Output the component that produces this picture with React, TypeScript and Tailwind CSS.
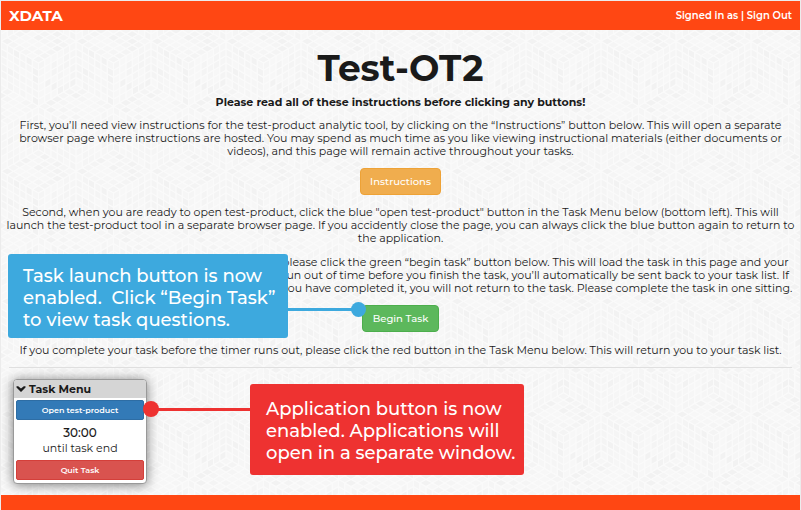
import React from 'react';

const TILES = 6;
const HALF = 37.5;
const RISE = 21.65;
const EDGE = 43.3;
const SHADES = ['#f7f7f7', '#f5f5f5', '#f6f6f6', '#f2f2f2', '#f7f7f7', '#f5f5f5', '#f4f4f4'];

type Point = [number, number];

/* One face of a cube, divided into a grid of small tiles. */
function Face({ origin, u, v, seed }: { origin: Point; u: Point; v: Point; seed: number }) {
  const tiles = [];
  for (let i = 0; i < TILES; i++) {
    for (let j = 0; j < TILES; j++) {
      const at = (a: number, b: number) => {
        const s = (i + a) / TILES;
        const t = (j + b) / TILES;
        return `${(origin[0] + u[0] * s + v[0] * t).toFixed(2)},${(origin[1] + u[1] * s + v[1] * t).toFixed(2)}`;
      };
      const noise = Math.abs(Math.sin((i + 1) * 12.9 + (j + 1) * 78.2 + seed * 37.7) * 4375.5);
      tiles.push(
        <polygon
          key={`${i}-${j}`}
          points={[at(0.1, 0.1), at(0.9, 0.1), at(0.9, 0.9), at(0.1, 0.9)].join(' ')}
          fill={SHADES[Math.floor(noise) % SHADES.length]}
        />,
      );
    }
  }
  return <>{tiles}</>;
}

function Cube({ x, y, seed }: { x: number; y: number; seed: number }) {
  return (
    <g>
      <Face origin={[x, y]} u={[-HALF, -RISE]} v={[HALF, -RISE]} seed={seed} />
      <Face origin={[x, y]} u={[-HALF, -RISE]} v={[0, EDGE]} seed={seed + 1} />
      <Face origin={[x, y]} u={[HALF, -RISE]} v={[0, EDGE]} seed={seed + 3} />
    </g>
  );
}

function CubePattern() {
  return (
    <svg aria-hidden="true" className="absolute inset-0 size-full">
      <defs>
        <pattern id="cubes" width="75" height="130" patternUnits="userSpaceOnUse" y="-3">
          <Cube x={37.5} y={65} seed={0} />
          <Cube x={0} y={0} seed={5} />
          <Cube x={75} y={0} seed={5} />
          <Cube x={0} y={130} seed={5} />
          <Cube x={75} y={130} seed={5} />
        </pattern>
      </defs>
      <rect width="100%" height="100%" fill="#fafafa" />
      <rect width="100%" height="373" fill="url(#cubes)" />
      <rect width="100%" height="100%" fill="url(#cubes)" transform="translate(0 373)" />
    </svg>
  );
}

export default function App() {
  return (
    <div className="relative flex min-h-screen flex-col overflow-hidden border border-b-0 border-[#ececec] font-['Montserrat',Inter,sans-serif] text-[11px] leading-[13px] text-[#1a1a1a]">
      <CubePattern />
      <header className="relative flex h-[29px] items-center justify-between bg-[#ff4713] px-2 text-white">
        <span className="text-[15px] font-bold">XDATA</span>
        <nav className="text-[10px] font-semibold">
          <span>Signed in as | </span>
          <a href="#signout">Sign Out</a>
        </nav>
      </header>

      <main className="relative flex-1 px-2 text-center">
        <h1 className="pt-[18px] text-[36px] leading-[40px] font-bold">Test-OT2</h1>
        <p className="mt-2 font-bold">Please read all of these instructions before clicking any buttons!</p>
        <p className="mt-[10px]">
          First, you’ll need view instructions for the test-product analytic tool, by clicking on the “Instructions” button below. This will open a separate
          <br />
          browser page where instructions are hosted. You may spend as much time as you like viewing instructional materials (either documents or
          <br />
          videos), and this page will remain active throughout your tasks.
        </p>
        <div className="mt-[10px] flex justify-center">
          <button className="h-[27px] w-[81px] rounded-[4px] border border-[#eea236] bg-[#f0ad4e] text-[10px] font-medium text-white">
            Instructions
          </button>
        </div>
        <p className="-mx-2 mt-[11px]">
          Second, when you are ready to open test-product, click the blue "open test-product" button in the Task Menu below (bottom left). This will
          <br />
          launch the test-product tool in a separate browser page. If you accidently close the page, you can always click the blue button again to return to
          <br />
          the application.
        </p>

        <div className="relative mt-[11px]">
          <p className="pl-[273px] text-left whitespace-nowrap">
            please click the green “begin task” button below. This will load the task in this page and your
            <br />
            run out of time before you finish the task, you’ll automatically be sent back to your task list. If
            <br />
            you have completed it, you will not return to the task. Please complete the task in one sitting.
          </p>
          <div className="mt-[10px] flex justify-center">
            <button className="h-[27px] w-[77px] rounded-[4px] border border-[#4cae4c] bg-[#5cb85c] text-[10px] font-medium text-white">
              Begin Task
            </button>
          </div>
          <aside className="absolute -top-[2px] -left-px w-[280px] rounded-[3px] bg-[#3da9de] pt-[11px] pb-[7px] pl-[15px] text-left text-[18px] leading-[22px] font-medium whitespace-pre text-white">
            Task launch button is now
            <br />
            {'enabled.  Click “Begin Task”'}
            <br />
            to view task questions.
            <span className="absolute top-[54px] left-full h-[3px] w-[70px] bg-[#3da9de]" />
            <span className="absolute top-[48px] left-[343px] size-[15px] rounded-full bg-[#3da9de]" />
          </aside>
        </div>

        <p className="mt-[12px]">
          If you complete your task before the timer runs out, please click the red button in the Task Menu below. This will return you to your task list.
        </p>
        <hr className="mt-[10px] border-[#e0e0e0]" />

        <div className="flex items-start pt-[11px] pb-[11px] pl-1">
          <section className="w-[134px] rounded-[4px] border border-[#999] bg-white shadow-[0_1px_12px_rgba(0,0,0,0.5)]">
            <h2 className="flex h-[18px] items-center gap-[3px] rounded-t-[3px] bg-[#d5d5d5] pl-[2px] font-bold">
              <svg aria-hidden="true" viewBox="0 0 10 8" className="h-2 w-[10px]">
                <path d="M0.5 1.2 L2.2 1.2 L5 3.6 L7.8 1.2 L9.5 1.2 L9.5 2.6 L5 7 L0.5 2.6 Z" fill="#1a1a1a" />
              </svg>
              Task Menu
            </h2>
            <div className="flex flex-col px-[2px] pt-[2px] pb-[3px]">
              <button className="h-5 rounded-[2px] border border-[#2e6da4] bg-[#337ab7] text-[8px] font-semibold text-white">
                Open test-product
              </button>
              <p className="pt-[5px] text-[11px] leading-[15px]">
                <span className="text-[12px] font-medium">30:00</span>
                <br />
                until task end
              </p>
              <button className="mt-1 h-5 rounded-[2px] border border-[#d43f3a] bg-[#d9534f] text-[8px] font-semibold text-white">
                Quit Task
              </button>
            </div>
          </section>
          <aside className="relative mt-[5px] ml-[103px] w-[274px] rounded-[3px] bg-[#ee3231] pt-[14px] pr-2 pb-[11px] pl-4 text-left text-[18px] leading-[22px] font-medium whitespace-nowrap text-white">
            Application button is now
            <br />
            enabled. Applications will
            <br />
            open in a separate window.
            <span className="absolute top-[24px] right-full h-[3px] w-[98px] bg-[#ee3231]" />
            <span className="absolute top-[17px] -left-[107px] size-4 rounded-full bg-[#ee3231]" />
          </aside>
        </div>
      </main>

      <footer className="relative h-[15px] bg-[#ff4713]" />
    </div>
  );
}
